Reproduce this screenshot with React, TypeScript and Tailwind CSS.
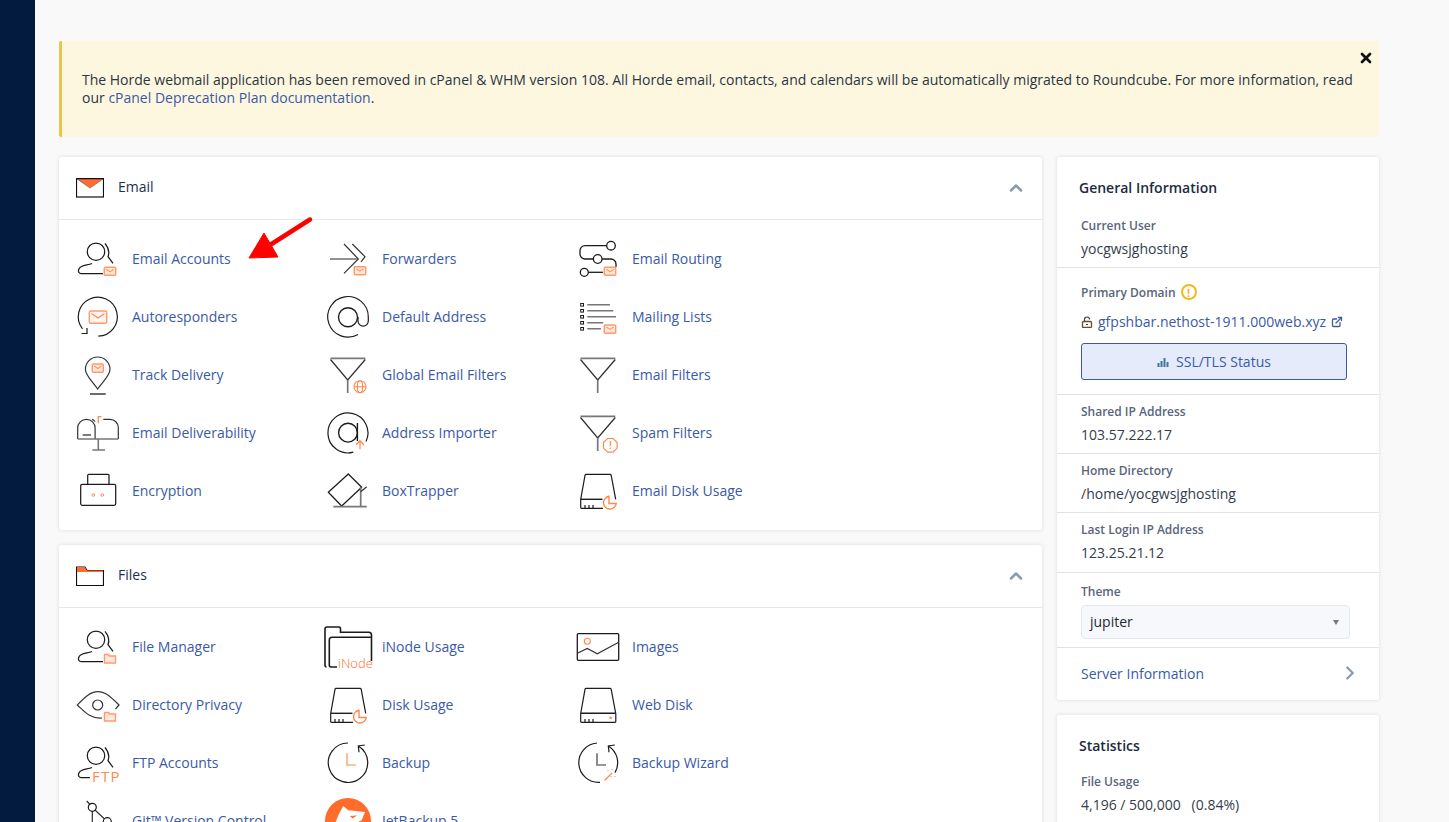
import { ChevronUp, ChevronRight, X, ExternalLink } from "lucide-react";
import type { ReactNode } from "react";

const OG = "#ff8a50";
const BK = "#1c1c1c";
const GR = "#777777";

const Mail = ({ x = 29.3, y = 31.3, w = 11.4, h = 8 }) => (
  <g stroke="#ff9a6b" fill="#fff" strokeWidth="1.5">
    <rect x={x} y={y} width={w} height={h} rx="1" fill="#ffe9dd" />
    <path d={`M${x + 2} ${y + 2}l${w / 2 - 2} 2.4l${w / 2 - 2} -2.4`} fill="none" strokeWidth="1.2" />
  </g>
);

const Folder = ({ y = 30.5 }) => (
  <path
    d={`M29.5 ${y}h4l1 1.5h6v7h-11z`}
    stroke="#ff9a6b"
    strokeWidth="1.4"
    fill="#ffe9dd"
  />
);

const Person = () => (
  <g stroke={BK} strokeWidth="1.25" fill="none">
    <circle cx="21" cy="15.7" r="8.7" />
    <path d="M30 7.3c4 5 4.5 9.5 3 13.4l5 6.6" />
    <path d="M28 37.5H6c-3.5 0-3.5-5 .5-7 3-1.5 7-1.5 10.5-3" />
  </g>
);

const Funnel = () => (
  <g fill="none" strokeWidth="1.3">
    <path d="M5.5 7.5L22.7 28L40.3 7.5" stroke="#333" />
    <path d="M5.5 6.3H40.3" stroke={GR} strokeWidth="1.7" />
    <path d="M22.7 28V41" stroke={GR} strokeWidth="1.7" />
  </g>
);

const Disk = ({ full = false }: { full?: boolean }) => (
  <g stroke={BK} strokeWidth="1.2" fill="none">
    <path d="M5.7 31.3L10 7.3q.2-1 1-1h24q1 0 1.2 1l4.5 24" />
    <path d={full ? "M5.7 31.3H40.7" : "M5.7 31.3H27.5"} strokeWidth="1.4" />
    <path d={full ? "M5.7 31.3V39.5q0 .8.8.8H40q.8 0 .8-.8V31.3" : "M5.7 31.3V39.5q0 .8.8.8H28"} />
    <path d="M10 37V40M14 37V40M18 37V40" />
  </g>
);

const Pie = () => (
  <path
    d="M34 28.3A6.4 6.4 0 1 0 41.3 35.5H34Z"
    stroke={OG}
    strokeWidth="1.4"
    fill="#fff"
  />
);

const ic: Record<string, ReactNode> = {
  accounts: (
    <>
      <Person />
      <Mail />
    </>
  ),
  forwarders: (
    <>
      <path d="M5 23H31.7" stroke={GR} strokeWidth="1.6" />
      <path d="M19 8L33.3 23L19 37.3M27.3 8L40 20.7L36 26" stroke="#333" strokeWidth="1.2" fill="none" />
      <Mail y={30.7} />
    </>
  ),
  routing: (
    <>
      <g stroke={BK} strokeWidth="1.3" fill="none">
        <circle cx="36" cy="9.7" r="4.3" />
        <path d="M31.7 9.7H10a5 5 0 0 0-5 5V18a5 5 0 0 0 5 5H18.3" />
        <circle cx="22.7" cy="23" r="4.3" />
        <path d="M27 23H36a5 5 0 0 1 5 5V31" />
        <circle cx="9.3" cy="36.3" r="4" />
        <path d="M13.4 36.3H28" />
      </g>
      <Mail />
    </>
  ),
  autoresponders: (
    <>
      <path
        d="M23.3 42.2A19.5 19.5 0 1 0 7.5 34.8"
        stroke={BK}
        strokeWidth="1.2"
        fill="none"
      />
      <path d="M6.5 39.5H12V34" stroke={BK} strokeWidth="1.2" fill="none" />
      <rect x="14.3" y="17" width="17.4" height="12.3" rx="1.5" stroke="#ff9a6b" strokeWidth="1.4" fill="#fff4ee" />
      <path d="M16.5 19.5L23 24L29.5 19.5" stroke={OG} strokeWidth="1.2" fill="none" />
    </>
  ),
  at: (
    <g stroke={BK} strokeWidth="1.2" fill="none">
      <path d="M33 40.5A20.3 20.3 0 1 1 43.3 23V27a5 5 0 0 1-10.3 0V23" />
      <circle cx="23" cy="23.3" r="9.5" strokeWidth="1.4" />
    </g>
  ),
  lists: (
    <>
      <g stroke={BK} strokeWidth="1" fill="none">
        <rect x="5.7" y="9.5" width="2.8" height="2.6" />
        <rect x="5.7" y="15.5" width="2.8" height="2.6" />
        <rect x="5.7" y="21.5" width="2.8" height="2.6" />
        <rect x="5.7" y="27.5" width="2.8" height="2.6" />
        <rect x="5.7" y="33.5" width="2.8" height="2.6" />
      </g>
      <path d="M12.3 10.7H35M12.3 16.7H38.3M12.3 22.7H41M12.3 28.7H28.3M12.3 34.7H26" stroke={GR} strokeWidth="1.5" />
      <Mail y={31} h={8.3} />
    </>
  ),
  track: (
    <>
      <path
        d="M22.7 37C19 31 10.4 24 10.4 17.3a12.3 12.3 0 0 1 24.6 0C35 24 26.4 31 22.7 37Z"
        stroke="#333"
        strokeWidth="1.2"
        fill="none"
      />
      <path d="M15 42H30.7" stroke={BK} strokeWidth="1.3" />
      <Mail x={17.3} y={12} w={11} h={8.3} />
    </>
  ),
  globalFilters: (
    <>
      <Funnel />
      <g stroke={OG} strokeWidth="1.1" fill="none">
        <circle cx="35" cy="34.7" r="6" />
        <ellipse cx="35" cy="34.7" rx="2.6" ry="6" />
        <path d="M29 34.7H41" />
      </g>
    </>
  ),
  filters: <Funnel />,
  deliverability: (
    <>
      <g stroke="#333" strokeWidth="1.2" fill="none">
        <path d="M2.7 29V18a8.7 8.7 0 0 1 17.4 0V29" />
        <path d="M20 11.5a5 5 0 0 0-3-2.2M28.3 9.3H35a8.3 8.3 0 0 1 8.3 8.3V29" />
        <path d="M7.7 25H16" strokeWidth="1.3" />
      </g>
      <path d="M2.7 29H43.3M23.3 29V40M17.3 40H30" stroke={GR} strokeWidth="1.6" fill="none" />
      <path d="M23.3 13.3V6.7H26.5" stroke={OG} strokeWidth="1.3" fill="none" />
    </>
  ),
  importer: (
    <>
      <g stroke={BK} strokeWidth="1.2" fill="none">
        <path d="M28.3 42.2A20 20 0 1 1 41 31.5" />
        <circle cx="23" cy="22.7" r="9.4" strokeWidth="1.4" />
        <path d="M32.4 13V31" strokeWidth="1.4" />
      </g>
      <path d="M35 39.3V31M31 35L35 30.7L39 35" stroke={OG} strokeWidth="1.3" fill="none" />
    </>
  ),
  spam: (
    <>
      <Funnel />
      <path d="M32.5 28.5h5.6l4 4v5.6l-4 4h-5.6l-4-4v-5.6z" stroke={OG} strokeWidth="1.2" fill="none" />
      <path d="M35.3 31V36M35.3 37.6V39" stroke={OG} strokeWidth="1.2" />
    </>
  ),
  encryption: (
    <>
      <g stroke={BK} strokeWidth="1.25" fill="none">
        <rect x="5.7" y="16.3" width="35" height="21" rx="1.5" />
        <path d="M12.7 16.3V7.3q0-1 1-1H33q1 0 1 1V16.3" />
      </g>
      <circle cx="18.3" cy="27" r="1.3" stroke={OG} fill="none" />
      <circle cx="27.3" cy="27" r="1.3" stroke={OG} fill="none" />
    </>
  ),
  boxtrapper: (
    <>
      <path
        d="M3.3 24.3L23.3 6L36.7 19.3L16.7 38Z"
        stroke={BK}
        strokeWidth="1.25"
        strokeLinejoin="round"
        fill="none"
      />
      <path d="M35.7 19V38.7M8.3 38.7H41.7" stroke={GR} strokeWidth="1.7" />
      <path d="M35.7 23.7L41.7 18.7" stroke="#333" strokeWidth="1.2" />
    </>
  ),
  diskUsage: (
    <>
      <Disk />
      <Pie />
    </>
  ),
  fileManager: (
    <>
      <Person />
      <Folder />
    </>
  ),
  inode: (
    <>
      <g stroke={BK} fill="none">
        <path d="M1.5 43Q0 43 0 41V5Q0 3 2 3H14Q15.5 3 15.5 5V8.3H44Q46.5 8.3 46.5 11V37" strokeWidth="1.6" />
        <path d="M12 43H6Q4.3 43 4.3 41V16Q4.3 13.3 7 13.3H46.5" strokeWidth="1.6" />
      </g>
      <text x="13" y="43.5" fontSize="13" fontWeight="300" fill="#ff6c2c" fontFamily="'Open Sans', sans-serif">
        iNode
      </text>
    </>
  ),
  images: (
    <>
      <rect x="2.3" y="9.7" width="41.4" height="26.6" rx="1" stroke={BK} strokeWidth="1.3" fill="none" />
      <circle cx="12.3" cy="17.3" r="3" stroke={OG} strokeWidth="1.1" fill="none" />
      <path d="M2.3 29.3L12.3 24.5L22.3 29.7L43.7 18.3" stroke="#333" strokeWidth="1.2" fill="none" />
    </>
  ),
  privacy: (
    <>
      <g stroke="#333" strokeWidth="1.2" fill="none">
        <path d="M27 36C15 37 9 29 2.3 23C9 16 15 9.7 23 9.7S37 16 44 23L40.5 27" />
        <circle cx="22.7" cy="23" r="5" />
      </g>
      <Folder />
    </>
  ),
  webDisk: (
    <>
      <Disk full />
      <circle cx="35.7" cy="35.7" r="1.3" fill={OG} />
    </>
  ),
  ftp: (
    <>
      <g stroke={BK} strokeWidth="1.25" fill="none">
        <circle cx="21" cy="15.7" r="8.7" />
        <path d="M30 7.3c4 5 4.5 9.5 3 13.4l5 6.6" />
        <path d="M15 37.5H6c-3.5 0-3.5-5 .5-7 3-1.5 7-1.5 10.5-3" />
      </g>
      <text x="17" y="41.5" fontSize="15" letterSpacing="1.3" fill={OG} fontFamily="'Open Sans', sans-serif">
        FTP
      </text>
    </>
  ),
  backup: (
    <>
      <path d="M33.3 5.9A19.7 19.7 0 1 1 23 3" stroke={BK} strokeWidth="1.2" fill="none" />
      <path d="M34 12.2L33.3 5.9L39.8 5" stroke={BK} strokeWidth="1.2" fill="none" />
      <path d="M22 13.3V25H31" stroke="#ffb08a" strokeWidth="1.7" fill="none" />
    </>
  ),
  wizard: (
    <>
      <path d="M33.3 5.9A19.7 19.7 0 0 1 40 32.6M25 42.3A19.7 19.7 0 1 1 22 3" stroke={BK} strokeWidth="1.2" fill="none" />
      <path d="M34 12.2L33.3 5.9L39.8 5" stroke={BK} strokeWidth="1.2" fill="none" />
      <path d="M22 13.3V25H31" stroke={GR} strokeWidth="1.7" fill="none" />
      <path d="M29.5 40.5L37 33" stroke={OG} strokeWidth="1.3" />
      <path d="M33 30V31M37 29V30M40 32V33M40 36V37M36 36V37" stroke={OG} strokeWidth="1" />
    </>
  ),
  git: (
    <>
      <path d="M11.7 3L15 6.5M20 12L29.5 21M17.3 13V40" stroke="#333" strokeWidth="1.2" fill="none" />
      <circle cx="17.3" cy="9.3" r="4" stroke={BK} strokeWidth="1.2" fill="none" />
      <circle cx="32.3" cy="23.7" r="4" stroke={BK} strokeWidth="1.2" fill="none" />
    </>
  ),
  jetbackup: (
    <>
      <circle cx="23" cy="23" r="23" fill="#ff6c2c" />
      <path d="M18.3 8L23.3 12.3L40 14L36.7 22.3L26.7 27L8.3 30L13.3 17.3Z" fill="#fff" />
      <path d="M25 18L32 17.5L27.5 20.5Z" fill="#ff6c2c" />
    </>
  ),
};

function Tool({ icon, label }: { icon: string; label: string }) {
  return (
    <a className="flex h-[58px] w-[250px] items-center gap-[11px] text-[14px] text-[#3a5aa5]">
      <svg viewBox="0 0 46 46" className="h-[46px] w-[46px] shrink-0 overflow-visible">
        {ic[icon]}
      </svg>
      <span className="mb-[2px]">{label}</span>
    </a>
  );
}

function Panel({
  icon,
  title,
  children,
  className,
}: {
  icon: ReactNode;
  title: string;
  children: ReactNode;
  className: string;
}) {
  return (
    <section className={`rounded-[3px] bg-white shadow-[0_0_4px_rgba(0,0,0,0.12)] ${className}`}>
      <div className="flex h-[63px] items-center border-b border-[#e4e7ee] pl-[17px] pr-[16px]">
        {icon}
        <h2 className="mb-[3px] ml-[14px] text-[14px] text-[#1d3050]">{title}</h2>
        <ChevronUp className="ml-auto h-[20px] w-[20px] text-[#8a9bb0]" strokeWidth={3} />
      </div>
      <div className="grid grid-cols-[repeat(3,250px)] px-4 pt-[10px]">{children}</div>
    </section>
  );
}

function InfoRow({ label, value, className }: { label: string; value: string; className: string }) {
  return (
    <div className={`border-b border-[#e2e2e2] px-6 ${className}`}>
      <div className="text-[12px] font-semibold leading-[16px] text-[#59657a]">{label}</div>
      <div className="mt-[5px] text-[14px] leading-[20px] text-[#333d4d]">{value}</div>
    </div>
  );
}

const emailTools = [
  ["accounts", "Email Accounts"],
  ["forwarders", "Forwarders"],
  ["routing", "Email Routing"],
  ["autoresponders", "Autoresponders"],
  ["at", "Default Address"],
  ["lists", "Mailing Lists"],
  ["track", "Track Delivery"],
  ["globalFilters", "Global Email Filters"],
  ["filters", "Email Filters"],
  ["deliverability", "Email Deliverability"],
  ["importer", "Address Importer"],
  ["spam", "Spam Filters"],
  ["encryption", "Encryption"],
  ["boxtrapper", "BoxTrapper"],
  ["diskUsage", "Email Disk Usage"],
];

const fileTools = [
  ["fileManager", "File Manager"],
  ["inode", "iNode Usage"],
  ["images", "Images"],
  ["privacy", "Directory Privacy"],
  ["diskUsage", "Disk Usage"],
  ["webDisk", "Web Disk"],
  ["ftp", "FTP Accounts"],
  ["backup", "Backup"],
  ["wizard", "Backup Wizard"],
  ["git", "Git™ Version Control"],
  ["jetbackup", "JetBackup 5"],
];

export default function App() {
  return (
    <div className="relative flex h-[822px] w-full overflow-hidden bg-[#f9f9fa] font-['Open_Sans',sans-serif]">
      <aside className="w-[35px] shrink-0 bg-[#031b3f]" />

      <main className="w-[1344px] pl-6 pt-[41px]">
        <div className="relative h-[96px] rounded-[2px] border-l-[3px] border-[#f0c14b] bg-[#fdf7e0] pl-[20px] pr-6 pt-[30px] text-[14px] leading-[18px] text-[#2c3542]">
          <X className="absolute right-[5px] top-[9px] h-[16px] w-[16px] text-[#111]" strokeWidth={4} />
          The Horde webmail application has been removed in cPanel &amp; WHM version 108. All Horde email, contacts, and
          calendars will be automatically migrated to Roundcube. For more information, read our{" "}
          <a className="text-[#3a5aa5]">cPanel Deprecation Plan documentation</a>.
        </div>

        <div className="mt-5 flex items-start gap-[15px]">
          <div className="flex w-[983px] flex-col gap-[15px]">
            <Panel
              title="Email"
              className="h-[373px]"
              icon={
                <svg viewBox="0 0 28 20" className="h-[20px] w-[28px]">
                  <rect x="0.5" y="0.5" width="27" height="18.5" fill="#fff" />
                  <path d="M1 1H27L14 10Z" fill="#ff6c2c" stroke="#444" strokeWidth="0.5" />
                  <rect x="0.5" y="0.5" width="27" height="18.5" fill="none" stroke="#111" strokeWidth="1.2" />
                </svg>
              }
            >
              {emailTools.map(([icon, label]) => (
                <Tool key={label} icon={icon} label={label} />
              ))}
            </Panel>

            <Panel
              title="Files"
              className="h-[400px]"
              icon={
                <svg viewBox="0 0 28 20" className="h-[20px] w-[28px]">
                  <path d="M0.5 19.5V1H9L11 4.5H27.5V19.5Z" fill="#fff" stroke="#111" strokeWidth="1.2" />
                  <path d="M1 1.2H9L10.8 4.5H27V6H1Z" fill="#ff6c2c" />
                </svg>
              }
            >
              {fileTools.map(([icon, label]) => (
                <Tool key={label} icon={icon} label={label} />
              ))}
            </Panel>
          </div>

          <div className="flex w-[322px] flex-col gap-[15px]">
            <section className="h-[543px] rounded-[3px] bg-white shadow-[0_0_4px_rgba(0,0,0,0.12)]">
              <h2 className="px-[22px] pt-[21px] text-[14px] font-semibold leading-[20px] text-[#1d2b40]">
                General Information
              </h2>
              <InfoRow label="Current User" value="yocgwsjghosting" className="h-[70px] pt-[20px]" />
              <div className="h-[127px] border-b border-[#e2e2e2] px-6 pt-[17px]">
                <div className="flex h-[16px] items-center gap-[5px] text-[12px] font-semibold leading-[16px] text-[#59657a]">
                  Primary Domain
                  <span className="mb-[2px] flex h-[16px] w-[16px] items-center justify-center rounded-full border-2 border-[#f2b91e] text-[11px] font-bold leading-none text-[#f2b91e]">
                    !
                  </span>
                </div>
                <div className="mt-[11px] flex items-center text-[14px] leading-[20px] text-[#3a5aa5]">
                  <svg viewBox="0 0 12 12" className="mr-[5px] h-[12px] w-[12px]">
                    <rect x="1.5" y="5.5" width="9" height="6" rx="1" fill="none" stroke="#6b4a33" strokeWidth="1.3" />
                    <path d="M3.5 5.5V3.5a2.5 2.5 0 0 1 5 0" fill="none" stroke="#444" strokeWidth="1.2" />
                    <path d="M5 8.5H7" stroke="#444" strokeWidth="1.2" />
                  </svg>
                  gfpshbar.nethost-1911.000web.xyz
                  <ExternalLink className="ml-[5px] h-[12px] w-[12px]" strokeWidth={2.6} />
                </div>
                <button className="mt-[11px] flex h-[37px] w-[266px] items-center justify-center gap-[7px] rounded-[3px] border border-[#3a5aa5] bg-[#e5ebfa] text-[14px] text-[#3a5aa5]">
                  <svg viewBox="0 0 12 12" className="h-[12px] w-[12px]">
                    <path d="M0.5 7h2v4h-2zM3.5 5h2v6h-2zM6.5 2h2v9h-2zM9.5 6h2v5h-2z" fill="#41759e" />
                  </svg>
                  SSL/TLS Status
                </button>
              </div>
              <InfoRow label="Shared IP Address" value="103.57.222.17" className="h-[59px] pt-[9px]" />
              <InfoRow label="Home Directory" value="/home/yocgwsjghosting" className="h-[59px] pt-[9px]" />
              <InfoRow label="Last Login IP Address" value="123.25.21.12" className="h-[60px] pt-[9px]" />
              <div className="h-[75px] border-b border-[#e2e2e2] px-6 pt-[11px]">
                <div className="text-[12px] font-semibold leading-[16px] text-[#59657a]">Theme</div>
                <div className="mt-[5px] flex h-[34px] w-[269px] items-center justify-between rounded-[4px] border border-[#e3e8f0] bg-[#f6f8fb] pb-[2px] pl-2 pr-[10px] text-[14px] text-[#1f2937]">
                  jupiter
                  <span className="mt-[2px] h-0 w-0 border-x-[3.5px] border-t-[5px] border-x-transparent border-t-[#777]" />
                </div>
              </div>
              <div className="flex h-[52px] items-center justify-between pb-[2px] pl-6 pr-[18px] text-[14px] text-[#3a5aa5]">
                Server Information
                <ChevronRight className="h-[22px] w-[22px] text-[#8a9bb0]" strokeWidth={2.5} />
              </div>
            </section>

            <section className="h-[300px] rounded-[3px] bg-white shadow-[0_0_4px_rgba(0,0,0,0.12)]">
              <h2 className="px-[22px] pt-[21px] text-[14px] font-semibold leading-[20px] text-[#1d2b40]">
                Statistics
              </h2>
              <div className="px-6 pt-[18px]">
                <div className="text-[12px] font-semibold leading-[16px] text-[#59657a]">File Usage</div>
                <div className="mt-[5px] whitespace-pre text-[14px] leading-[20px] text-[#333d4d]">
                  4,196 / 500,000   (0.84%)
                </div>
              </div>
            </section>
          </div>
        </div>
      </main>

      {/* red annotation arrow drawn over the page */}
      <svg viewBox="0 0 70 50" className="pointer-events-none absolute left-[246px] top-[216px] h-[50px] w-[70px]">
        <path d="M64 3.5L24 29" stroke="#ff0000" strokeWidth="4.5" strokeLinecap="round" />
        <path d="M3 42L18 17L32 41Z" fill="#ff0000" stroke="#ff0000" strokeLinejoin="round" />
      </svg>
    </div>
  );
}
